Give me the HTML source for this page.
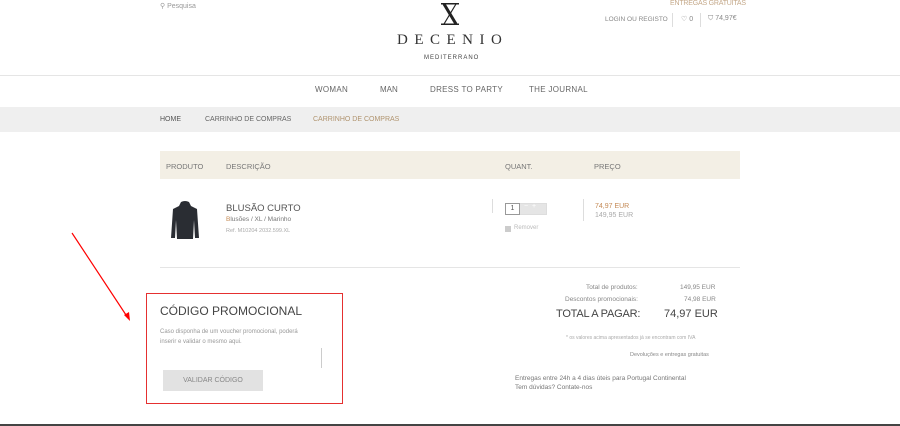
<!DOCTYPE html>
<html><head><meta charset="utf-8"><style>
*{margin:0;padding:0;box-sizing:border-box}
body{width:900px;height:426px;overflow:hidden;background:#fff;font-family:"Liberation Sans",sans-serif;color:#555;position:relative}
.a{position:absolute;white-space:nowrap}
</style></head><body>
<div class="a" style="left:160px;top:2px;font-size:7px;color:#999">&#9906; Pesquisa</div>
<div class="a" style="left:670px;top:0;font-size:7px;color:#c4a889;letter-spacing:-.2px">ENTREGAS GRATUITAS</div>
<div class="a" style="left:605px;top:16px;font-size:6.5px;color:#888">LOGIN OU REGISTO</div>
<div class="a" style="left:672px;top:13px;width:1px;height:14px;background:#ddd"></div>
<div class="a" style="left:681px;top:15px;font-size:7px;color:#888">♡ 0</div>
<div class="a" style="left:700px;top:13px;width:1px;height:14px;background:#ddd"></div>
<div class="a" style="left:708px;top:15px;font-size:7px;color:#888">⛉ 74,97€</div>
<svg class="a" style="left:439px;top:3px" width="22" height="22" viewBox="0 0 22 22"><rect x="2" y="0" width="18" height="1.5" fill="#222"/><rect x="2" y="20.5" width="18" height="1.5" fill="#222"/><path d="M5 1 L17 21" stroke="#222" stroke-width="3"/><path d="M17 1 L5 21" stroke="#222" stroke-width="1.2"/></svg>
<div class="a" style="left:397px;top:32px;font-family:'Liberation Serif',serif;font-size:15px;letter-spacing:6.5px;color:#333">DECENIO</div>
<div class="a" style="left:424px;top:55px;font-size:6px;letter-spacing:1px;color:#444">MEDITERRANO</div>
<div class="a" style="left:0;top:75px;width:900px;height:1px;background:#e5e5e5"></div>
<div class="a" style="left:315px;top:85px;font-size:8px;color:#666;letter-spacing:.3px">WOMAN</div>
<div class="a" style="left:380px;top:85px;font-size:8px;color:#666">MAN</div>
<div class="a" style="left:430px;top:85px;font-size:8px;color:#666;letter-spacing:.3px">DRESS TO PARTY</div>
<div class="a" style="left:529px;top:85px;font-size:8px;color:#666;letter-spacing:.3px">THE JOURNAL</div>
<div class="a" style="left:0;top:107px;width:900px;height:25px;background:#efefef"></div>
<div class="a" style="left:160px;top:116px;font-size:7px;color:#555">HOME</div>
<div class="a" style="left:205px;top:116px;font-size:7px;color:#666">CARRINHO DE COMPRAS</div>
<div class="a" style="left:313px;top:116px;font-size:7px;color:#b0946f">CARRINHO DE COMPRAS</div>
<div class="a" style="left:160px;top:151px;width:580px;height:28px;background:#f3efe5"></div>
<div class="a" style="left:166px;top:162px;font-size:7.5px;color:#777">PRODUTO</div>
<div class="a" style="left:226px;top:162px;font-size:7.5px;color:#777">DESCRIÇÃO</div>
<div class="a" style="left:505px;top:162px;font-size:7.5px;color:#777">QUANT.</div>
<div class="a" style="left:594px;top:162px;font-size:7.5px;color:#777">PREÇO</div>
<svg class="a" style="left:170px;top:200px" width="30" height="40" viewBox="0 0 30 40"><path d="M11 2 Q15 0 19 2 L21 6 L27 9 L29 38 L25 38 L24 20 L23 39 L7 39 L6 20 L5 38 L1 38 L3 9 L9 6 Z" fill="#2a2d33"/></svg>
<div class="a" style="left:226px;top:203px;font-size:9.5px;color:#555">BLUSÃO CURTO</div>
<div class="a" style="left:226px;top:216px;font-size:6.5px;color:#777"><span style="color:#c48a55">B</span>lusões / XL / Marinho</div>
<div class="a" style="left:226px;top:228px;font-size:5.5px;color:#aaa">Ref. M10204 2032.599.XL</div>
<div class="a" style="left:492px;top:199px;width:1px;height:14px;background:#ddd"></div>
<div class="a" style="left:505px;top:203px;width:42px;height:12px;background:#e5e5e5;border:1px solid #ddd"></div>
<div class="a" style="left:505px;top:203px;width:15px;height:12px;background:#fff;border:1px solid #999;font-size:7px;text-align:center;line-height:10px">1</div>
<div class="a" style="left:524px;top:203px;font-size:7px;color:#fff">−&nbsp;&nbsp;+</div>
<div class="a" style="left:505px;top:226px;width:6px;height:6px;background:#ccc"></div>
<div class="a" style="left:514px;top:225px;font-size:6px;color:#bbb">Remover</div>
<div class="a" style="left:583px;top:199px;width:1px;height:22px;background:#ddd"></div>
<div class="a" style="left:595px;top:203px;font-size:7px;color:#c48a55">74,97 EUR</div>
<div class="a" style="left:595px;top:212px;font-size:7px;color:#aaa">149,95 EUR</div>
<div class="a" style="left:160px;top:267px;width:580px;height:1px;background:#e5e5e5"></div>
<div class="a" style="left:146px;top:293px;width:197px;height:111px;border:1.5px solid #e53030"></div>
<div class="a" style="left:160px;top:304px;font-size:12px;color:#444">CÓDIGO PROMOCIONAL</div>
<div class="a" style="left:160px;top:327px;font-size:6px;color:#999;line-height:10px">Caso disponha de um voucher promocional, poderá<br>inserir e validar o mesmo aqui.</div>
<div class="a" style="left:321px;top:348px;width:1px;height:20px;background:#ccc"></div>
<div class="a" style="left:163px;top:370px;width:100px;height:21px;background:#e2e2e2;font-size:7px;color:#888;text-align:center;line-height:21px">VALIDAR CÓDIGO</div>
<div class="a" style="left:586px;top:284px;font-size:6.5px;color:#888">Total de produtos:</div>
<div class="a" style="left:680px;top:284px;font-size:6.5px;color:#888">149,95 EUR</div>
<div class="a" style="left:565px;top:296px;font-size:6.5px;color:#888">Descontos promocionais:</div>
<div class="a" style="left:684px;top:296px;font-size:6.5px;color:#888">74,98 EUR</div>
<div class="a" style="left:556px;top:308px;font-size:11px;color:#444;letter-spacing:-.2px">TOTAL A PAGAR:</div>
<div class="a" style="left:664px;top:308px;font-size:11px;color:#444">74,97 EUR</div>
<div class="a" style="left:566px;top:335px;font-size:5px;color:#aaa">* os valores acima apresentados já se encontram com IVA</div>
<div class="a" style="left:630px;top:352px;font-size:5.5px;color:#888">Devoluções e entregas gratuitas</div>
<div class="a" style="left:515px;top:374px;font-size:6.5px;color:#777;line-height:9px">Entregas entre 24h a 4 dias úteis para Portugal Continental<br>Tem dúvidas? Contate-nos</div>
<svg class="a" style="left:0;top:0" width="900" height="426"><line x1="72" y1="233" x2="128" y2="318" stroke="#f00" stroke-width="1.2"/><polygon points="130,321 124,315 129,312" fill="#f00"/><rect x="0" y="424" width="900" height="2" fill="#444"/></svg>
</body></html>
